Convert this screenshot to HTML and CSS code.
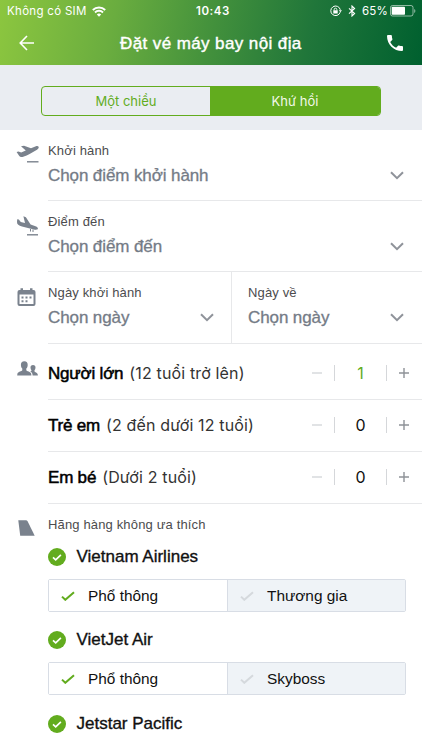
FILE: index.html
```html
<!DOCTYPE html>
<html lang="vi">
<head>
<meta charset="utf-8">
<title>Đặt vé máy bay nội địa</title>
<link rel="stylesheet" href="styles.css">
</head>
<body>
<svg class="defs" aria-hidden="true">
  <symbol id="chevron" viewBox="0 0 14 9"><path d="M1 1.2l6 6 6-6" fill="none" stroke="#8f939a" stroke-width="2"/></symbol>
  <symbol id="tick" viewBox="0 0 14 10"><path d="M1 5.6l3.3 3.2L13 1.2" fill="none" stroke="currentColor" stroke-width="2"/></symbol>
  <symbol id="badge" viewBox="0 0 18 18"><circle cx="9" cy="9" r="9" fill="#62ac1e"/><path d="M5 9.4l2.7 2.5 5.2-5" fill="none" stroke="#fff" stroke-width="1.7"/></symbol>
  <symbol id="minus" viewBox="0 0 10 10"><path d="M0 5h10" stroke="#d5d7da" stroke-width="1.4"/></symbol>
  <symbol id="plus" viewBox="0 0 10 10"><path d="M0 5h10M5 0v10" stroke="#8e9298" stroke-width="1.4"/></symbol>
</svg>
<header class="top">
  <div class="status">
    <span class="carrier">Không có SIM</span>
    <svg class="wifi" width="14" height="11" viewBox="0 0 14 11"><g fill="none" stroke="#fff" stroke-width="1.9"><path d="M.8 4a8.8 8.8 0 0 1 12.4 0"/><path d="M3 6.5a5.6 5.6 0 0 1 8 0"/></g><path d="M4.8 8.5a3.1 3.1 0 0 1 4.4 0L7 10.8z" fill="#fff"/></svg>
    <span class="clock">10:43</span>
    <svg class="lock" width="12" height="12" viewBox="0 0 12 12"><path d="M10.2 7.2A4.8 4.8 0 1 1 10.3 4.800" fill="none" stroke="#fff"/><path d="M8.800 5.200h3.200l-1.600 2z" fill="#fff"/><rect x="3.300" y="5.300" width="4.400" height="3.200" fill="#fff"/><path d="M4.200 5.500v-1a1.300 1.300 0 0 1 2.600 0v1" fill="none" stroke="#fff" stroke-width=".9"/></svg>
    <svg class="bt" width="8" height="12" viewBox="0 0 8 12"><path d="M1 3.300l5.600 5.200L4 11V1l2.600 2.500L1 8.700" fill="none" stroke="#fff" stroke-width="1.100"/></svg>
    <span class="pct">65%</span>
    <svg class="battery" width="26" height="12" viewBox="0 0 26 12"><rect x=".5" y=".5" width="22.500" height="10.500" rx="2" fill="none" stroke="#fff" stroke-opacity=".55"/><rect x="1.700" y="1.800" width="13.300" height="8" rx=".8" fill="#fff"/><path d="M24.200 4v4q1.200-.6 1.200-2t-1.200-2" fill="#fff" fill-opacity=".55"/></svg>
  </div>
  <div class="bar">
    <svg class="back" width="16" height="16" viewBox="0 0 16 16"><path d="M15 8H1.200M8 1L1.200 8 8 15" fill="none" stroke="#fff" stroke-width="1.600"/></svg>
    <h1>Đặt vé máy bay nội địa</h1>
    <svg class="phone" width="16" height="16" viewBox="3 3 18 18"><path fill="#fff" d="M6.620 10.790c1.440 2.830 3.760 5.140 6.590 6.590l2.200-2.200c.27-.27.67-.36 1.020-.24 1.120.37 2.330.57 3.570.57.55 0 1 .45 1 1V20c0 .55-.45 1-1 1-9.390 0-17-7.610-17-17 0-.55.45-1 1-1h3.500c.55 0 1 .45 1 1 0 1.250.2 2.450.57 3.570.11.35.03.74-.25 1.020z"/></svg>
  </div>
</header>
<nav class="tabs">
  <div class="seg"><span class="tab">Một chiều</span><span class="tab on">Khứ hồi</span></div>
</nav>
<main>
  <section class="row">
    <svg class="icon takeoff" width="24" height="24" viewBox="0 0 24 24"><path fill="#7a828d" d="M22.700 5c-.3-.9-1.500-1.200-2.800-.7L15 6.200 8 3.800l-3 .5 4.800 4.300-4.600 1.900-2.700-1.100-1.900.5 2.700 4.200c.7 1 1.700 1.200 3.200.8 2.800-.7 5.600-2 8-3.400l5.200-2.900C21.700 7.500 23 6.200 22.700 5z"/><path d="M11 19.800h11.500" stroke="#7a828d" stroke-width="1.400"/></svg>
    <div class="field"><div class="label">Khởi hành</div><div class="value">Chọn điểm khởi hành</div><svg class="chev"><use href="#chevron"/></svg></div>
  </section>
  <section class="row">
    <svg class="icon landing" width="24" height="24" viewBox="0 0 24 24"><path fill="#7a828d" d="M1.200 4.200l1.600.3 2 2.500 4.200 1L7.400 1.300l2.500.9 4.700 7.300 4.900 1.700c1.800.7 2.700 1.700 2.400 2.600-.3 1-2 1.100-4 .6L6 11.600C2.700 10.600 1 9.500 1 7z"/><path d="M14.500 14v2.500M17 14.500V17" stroke="#7a828d"/><path d="M11 19.800h11" stroke="#7a828d" stroke-width="1.400"/></svg>
    <div class="field"><div class="label">Điểm đến</div><div class="value">Chọn điểm đến</div><svg class="chev"><use href="#chevron"/></svg></div>
  </section>
  <section class="row dates">
    <svg class="icon cal" width="19" height="19" viewBox="0 0 19 19"><path fill="#7a828d" fill-rule="evenodd" d="M2.500 2h1V.3h2.500V2h7V.3h2.500V2h1q2 0 2 2v12q0 2-2 2h-14q-2 0-2-2V4q0-2 2-2zm0 4.500V16h14V6.500z"/><path d="M4.500 9.500h2m2 0h2m2 0h2m-10 3.800h2m2 0h2" stroke="#7a828d" stroke-width="1.900"/></svg>
    <div class="field depart"><div class="label">Ngày khởi hành</div><div class="value">Chọn ngày</div><svg class="chev"><use href="#chevron"/></svg></div>
    <div class="field return"><div class="label">Ngày về</div><div class="value">Chọn ngày</div><svg class="chev"><use href="#chevron"/></svg></div>
  </section>
  <section class="row pax first">
    <svg class="icon people" width="21" height="15" viewBox="0 0 21 15"><path fill="#7a828d" d="M7.300.2c2.300 0 3.500 1.500 3.400 3.700-.1 1.700-.6 2.800-1.400 3.700v1.600c.3 1 4.500 1.300 4.900 3.600l.2 1.700H.2l.2-1.700c.4-2.300 4.600-2.600 4.900-3.600V7.600C4.500 6.700 4 5.600 3.900 3.900 3.800 1.700 5 .2 7.300.2z"/><path fill="#7a828d" d="M16 4c1.700 0 2.600 1.100 2.500 2.700-.1 1.200-.4 2-1 2.600v1.200c.3.800 2.900 1 3.200 2.700l.2 1.300h-5.300c0-2.600-1.300-3.500-2.500-4.200.8-.2 1.300-.5 1.400-.8V9.300c-.6-.6-.9-1.400-1-2.600C13.400 5.100 14.300 4 16 4z"/></svg>
    <div class="field"><span class="who"><b>Người lớn</b><i>(12 tuổi trở lên)</i></span><span class="step"><svg><use href="#minus"/></svg><span class="num one">1</span><svg><use href="#plus"/></svg></span></div>
  </section>
  <section class="row pax">
    <div class="field"><span class="who"><b>Trẻ em</b><i>(2 đến dưới 12 tuổi)</i></span><span class="step"><svg><use href="#minus"/></svg><span class="num">0</span><svg><use href="#plus"/></svg></span></div>
  </section>
  <section class="row pax">
    <div class="field"><span class="who"><b>Em bé</b><i>(Dưới 2 tuổi)</i></span><span class="step"><svg><use href="#minus"/></svg><span class="num">0</span><svg><use href="#plus"/></svg></span></div>
  </section>
  <section class="row airlines">
    <svg class="icon tail" width="17" height="16" viewBox="0 0 17 16"><path fill="#7a828d" d="M.3.3h7.500q1.300 0 1.900 1.200l7 14.200H2.200z"/></svg>
    <div class="list">
      <div class="label">Hãng hàng không ưa thích</div>
      <div class="air"><svg><use href="#badge"/></svg><span>Vietnam Airlines</span></div>
      <div class="opts"><div class="opt on"><svg><use href="#tick"/></svg><span>Phổ thông</span></div><div class="opt"><svg><use href="#tick"/></svg><span>Thương gia</span></div></div>
      <div class="air"><svg><use href="#badge"/></svg><span>VietJet Air</span></div>
      <div class="opts"><div class="opt on"><svg><use href="#tick"/></svg><span>Phổ thông</span></div><div class="opt"><svg><use href="#tick"/></svg><span>Skyboss</span></div></div>
      <div class="air"><svg><use href="#badge"/></svg><span>Jetstar Pacific</span></div>
    </div>
  </section>
</main>
</body>
</html>
```
FILE: styles.css
```css
* { box-sizing: border-box; }
body { margin: 0; width: 422px; height: 750px; overflow: hidden; background: #fff; font-family: "Liberation Sans", Arial, sans-serif; color: #111; }
svg { display: block; flex: none; }
.defs { position: absolute; width: 0; height: 0; }
.top { height: 65px; background: linear-gradient(100deg, #8cc63f 0%, #6aad3f 27%, #43913c 50%, #20763a 73%, #00602f 100%); color: #fff; }
.status { display: flex; align-items: center; height: 22px; padding-left: 7px; font: 11.5px/22px Inter, sans-serif; white-space: nowrap; }
.carrier { width: 85px; letter-spacing: .3px; }
.clock { width: 134px; margin-left: 90px; font-weight: 600; letter-spacing: .55px; }
.bt { margin-left: 6px; }
.pct { width: 28px; margin-left: 6px; letter-spacing: .2px; }
.bar { display: flex; align-items: center; height: 43px; padding: 0 19px; }
.bar svg { margin-bottom: 2px; }
.bar h1 { flex: 1; margin: 1px 0 0; padding-left: 85px; font-size: 17px; line-height: 42px; font-weight: 400; letter-spacing: .4px; -webkit-text-stroke: .4px #fff; white-space: nowrap; }
.tabs { height: 65px; padding: 21px 41px 0; background: #eaedf2; }
.seg { display: flex; height: 30px; border: 1px solid #62ac1e; border-radius: 4px; overflow: hidden; }
.tab { width: 168px; text-align: center; font: 13px/28px Inter, sans-serif; color: #62ac1e; }
.tab.on { flex: 1; background: #62ac1e; color: #f1f8e9; }
.row { display: flex; }
.icon { margin-left: 16px; }
.field { position: relative; width: 374px; height: 71px; margin-left: auto; padding-top: 11px; border-bottom: 1px solid #e7e8ea; white-space: nowrap; }
.label { font-size: 13px; line-height: 19px; letter-spacing: .15px; color: #4c4c4e; }
.value { padding-top: 4px; font-size: 17px; line-height: 24px; letter-spacing: -.1px; color: #747b86; -webkit-text-stroke: .3px #747b86; }
.chev { position: absolute; right: 18px; top: 41px; width: 14px; height: 9px; }
.depart .chev { right: 17px; }
.takeoff { margin-top: 12px; }
.landing { margin-top: 14px; }
.cal { margin: 16px 0 0 17px; }
.dates .field { height: 72px; }
.field.depart { width: 184px; border-right: 1px solid #e7e8ea; }
.field.return { width: 190px; margin-left: 0; padding-left: 16px; }
.pax .field { display: flex; align-items: center; height: 52px; padding: 0 13px 0 0; }
.pax.first .field { height: 56px; padding-top: 4px; }
.people { margin: 17px 0 0 17px; }
.who { font-size: 17px; line-height: 24px; flex: 1; }
.who b { font-weight: 400; letter-spacing: -.2px; color: #000; -webkit-text-stroke: .5px #000; }
.who i { margin-left: 6px; font: 16px/24px Inter, sans-serif; letter-spacing: .15px; color: #333; }
.step { display: flex; align-items: center; margin-bottom: 2px; }
.step svg { width: 10px; height: 10px; }
.num { width: 53px; height: 16px; margin: 0 12px; border: solid #d5d7da; border-width: 0 1px; text-align: center; font: 16px/16px Inter, sans-serif; color: #111; }
.num.one { color: #62ac1e; }
.tail { margin: 16px 0 0 18px; }
.list { width: 358px; margin: 11px 16px 0 auto; }
.air { display: flex; align-items: center; height: 44px; margin-top: 1px; font-size: 17px; -webkit-text-stroke: .35px #111; }
.air svg { width: 18px; height: 18px; margin-right: 10.5px; }
.air:last-child { margin-top: 7px; }
.opts { display: flex; height: 33px; margin-bottom: 6px; border: 1px solid #d8dde5; border-radius: 2px; }
.opt { display: flex; align-items: center; width: 178px; padding-left: 12px; background: #eff3f7; font-size: 15.4px; color: #111; }
.opt + .opt { flex: 1; border-left: 1px solid #d8dde5; }
.opt svg { width: 14px; height: 10px; margin-right: 13px; color: #d5d9dd; }
.opt.on { background: #fff; }
.opt.on svg { color: #62ac1e; }
```
